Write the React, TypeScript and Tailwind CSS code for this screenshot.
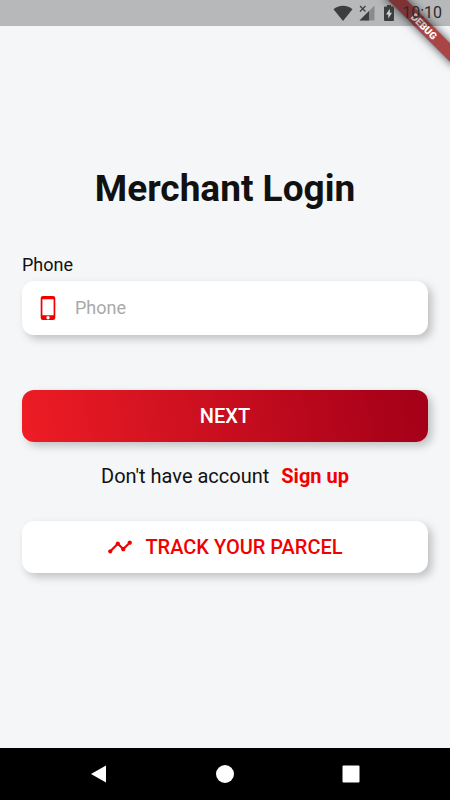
import { useState } from 'react';
import { MdTimeline } from 'react-icons/md';

// sits over the page and darkens whatever is under it, the banner too
const StatusBar = () => {
  return (
    <div className="relative z-10 flex h-[26px] items-center justify-end bg-black/25 pr-2 text-[#3c3d3e]">
      <svg className="h-4 w-5" viewBox="0 0 20 16" fill="currentColor">
        <path d="M10 16 L0.5 4.2 C3 2 6.300 0.800 10 0.800 S17 2 19.500 4.200 Z" />
      </svg>
      <svg className="ml-[6px] h-4 w-4" viewBox="0 0 16 16">
        <path d="M15.500 0.500 V15.500 H0.500 Z" fill="#8a8b8c" />
        <path d="M10 6 V15.500 H0.500 Z" fill="currentColor" />
        <path
          d="M1 1 L6.500 6.500 M6.500 1 L1 6.500"
          stroke="currentColor"
          strokeWidth="1.2"
        />
      </svg>
      <svg
        className="ml-[9px] h-4 w-[10px]"
        viewBox="0 0 10 16"
        fill="currentColor"
      >
        <path d="M3 0h4v1.600h2q1 0 1 1v12.400q0 1-1 1h-8q-1 0-1-1v-12.400q0-1 1-1h2z" />
        <path d="M5.800 3.800L2 9.600h2.300v4L8 7.800H5.800z" fill="#d0d1d2" />
      </svg>
      <span className="ml-2 text-base leading-5 text-[#2e2a2a]">10:10</span>
    </div>
  );
};

const DebugBanner = () => {
  return (
    <div className="pointer-events-none absolute top-0 right-0 h-20 w-20 overflow-hidden">
      <div className="absolute top-5 -right-6 w-[100px] rotate-45 bg-[#900a0c]/75 text-center text-[10px] leading-[13px] font-black text-white shadow-[0_0_10px_rgba(0,0,0,0.7)]">
        DEBUG
      </div>
    </div>
  );
};

const PhoneIcon = () => {
  return (
    <svg
      className="h-[26px] w-[26px] shrink-0 text-[#f20000]"
      viewBox="0 0 26 26"
      fill="currentColor"
      fillRule="evenodd"
    >
      <path d="M8 1h10q2.300 0 2.300 2.300v19.400q0 2.300-2.300 2.300h-10q-2.300 0-2.300-2.300v-19.400q0-2.300 2.300-2.300zM7.400 4.200v16h11.200v-16zM13 20.900a1.700 1.700 0 1 0 0.010 0z" />
    </svg>
  );
};

const NavBar = () => {
  return (
    <nav className="flex h-[52px] items-center justify-center gap-[106px] bg-black text-white">
      <button type="button" aria-label="Back">
        <svg className="h-5 w-5" viewBox="0 0 20 20" fill="currentColor">
          <path d="M17 1.500 V18.500 L2 10 Z" />
        </svg>
      </button>
      <button type="button" aria-label="Home">
        <svg className="h-5 w-5" viewBox="0 0 20 20" fill="currentColor">
          <circle cx="10" cy="10" r="9" />
        </svg>
      </button>
      <button type="button" aria-label="Recent apps">
        <svg className="h-5 w-5" viewBox="0 0 20 20" fill="currentColor">
          <rect x="1.500" y="1.500" width="17" height="17" rx="1" />
        </svg>
      </button>
    </nav>
  );
};

const App = () => {
  const [phone, setPhone] = useState('');

  return (
    <div className="relative flex min-h-screen flex-col bg-[#f4f6f8] font-[Roboto,sans-serif] text-[#111111]">
      <StatusBar />
      <DebugBanner />

      <main className="flex flex-1 flex-col justify-center px-[22px] pb-[34px]">
        <h1 className="text-center text-[37px] leading-[44px] font-bold">
          Merchant Login
        </h1>

        <form className="mt-[42px]" onSubmit={(e) => e.preventDefault()}>
          <label htmlFor="phone" className="block text-lg leading-6">
            Phone
          </label>
          <div className="mt-1 flex h-[54px] items-center rounded-xl bg-white px-[13px] shadow-[4px_4px_8px_rgba(0,0,0,0.22)]">
            <PhoneIcon />
            <input
              id="phone"
              type="tel"
              placeholder="Phone"
              className="ml-[14px] w-full bg-transparent text-lg outline-none placeholder:text-[#a9a9a9]"
              value={phone}
              onChange={(e) => setPhone(e.target.value)}
            />
          </div>

          <button
            type="submit"
            className="mt-[55px] h-[52px] w-full rounded-xl bg-linear-80 from-[#ee1c25] to-[#a30018] text-xl font-medium text-white shadow-[4px_4px_8px_rgba(0,0,0,0.22)]"
          >
            NEXT
          </button>
        </form>

        <div className="mt-[22px] flex justify-center gap-3 text-xl leading-6">
          <span>Don't have account</span>
          <a href="#signup" className="font-bold text-[#f20000]">
            Sign up
          </a>
        </div>

        <button
          type="button"
          className="mt-[33px] flex h-[52px] w-full items-center justify-center gap-3 rounded-xl bg-white text-xl font-medium text-[#f20000] shadow-[4px_4px_8px_rgba(0,0,0,0.22)]"
        >
          <MdTimeline className="h-[26px] w-[26px]" />
          TRACK YOUR PARCEL
        </button>
      </main>

      <NavBar />
    </div>
  );
};

export default App;
